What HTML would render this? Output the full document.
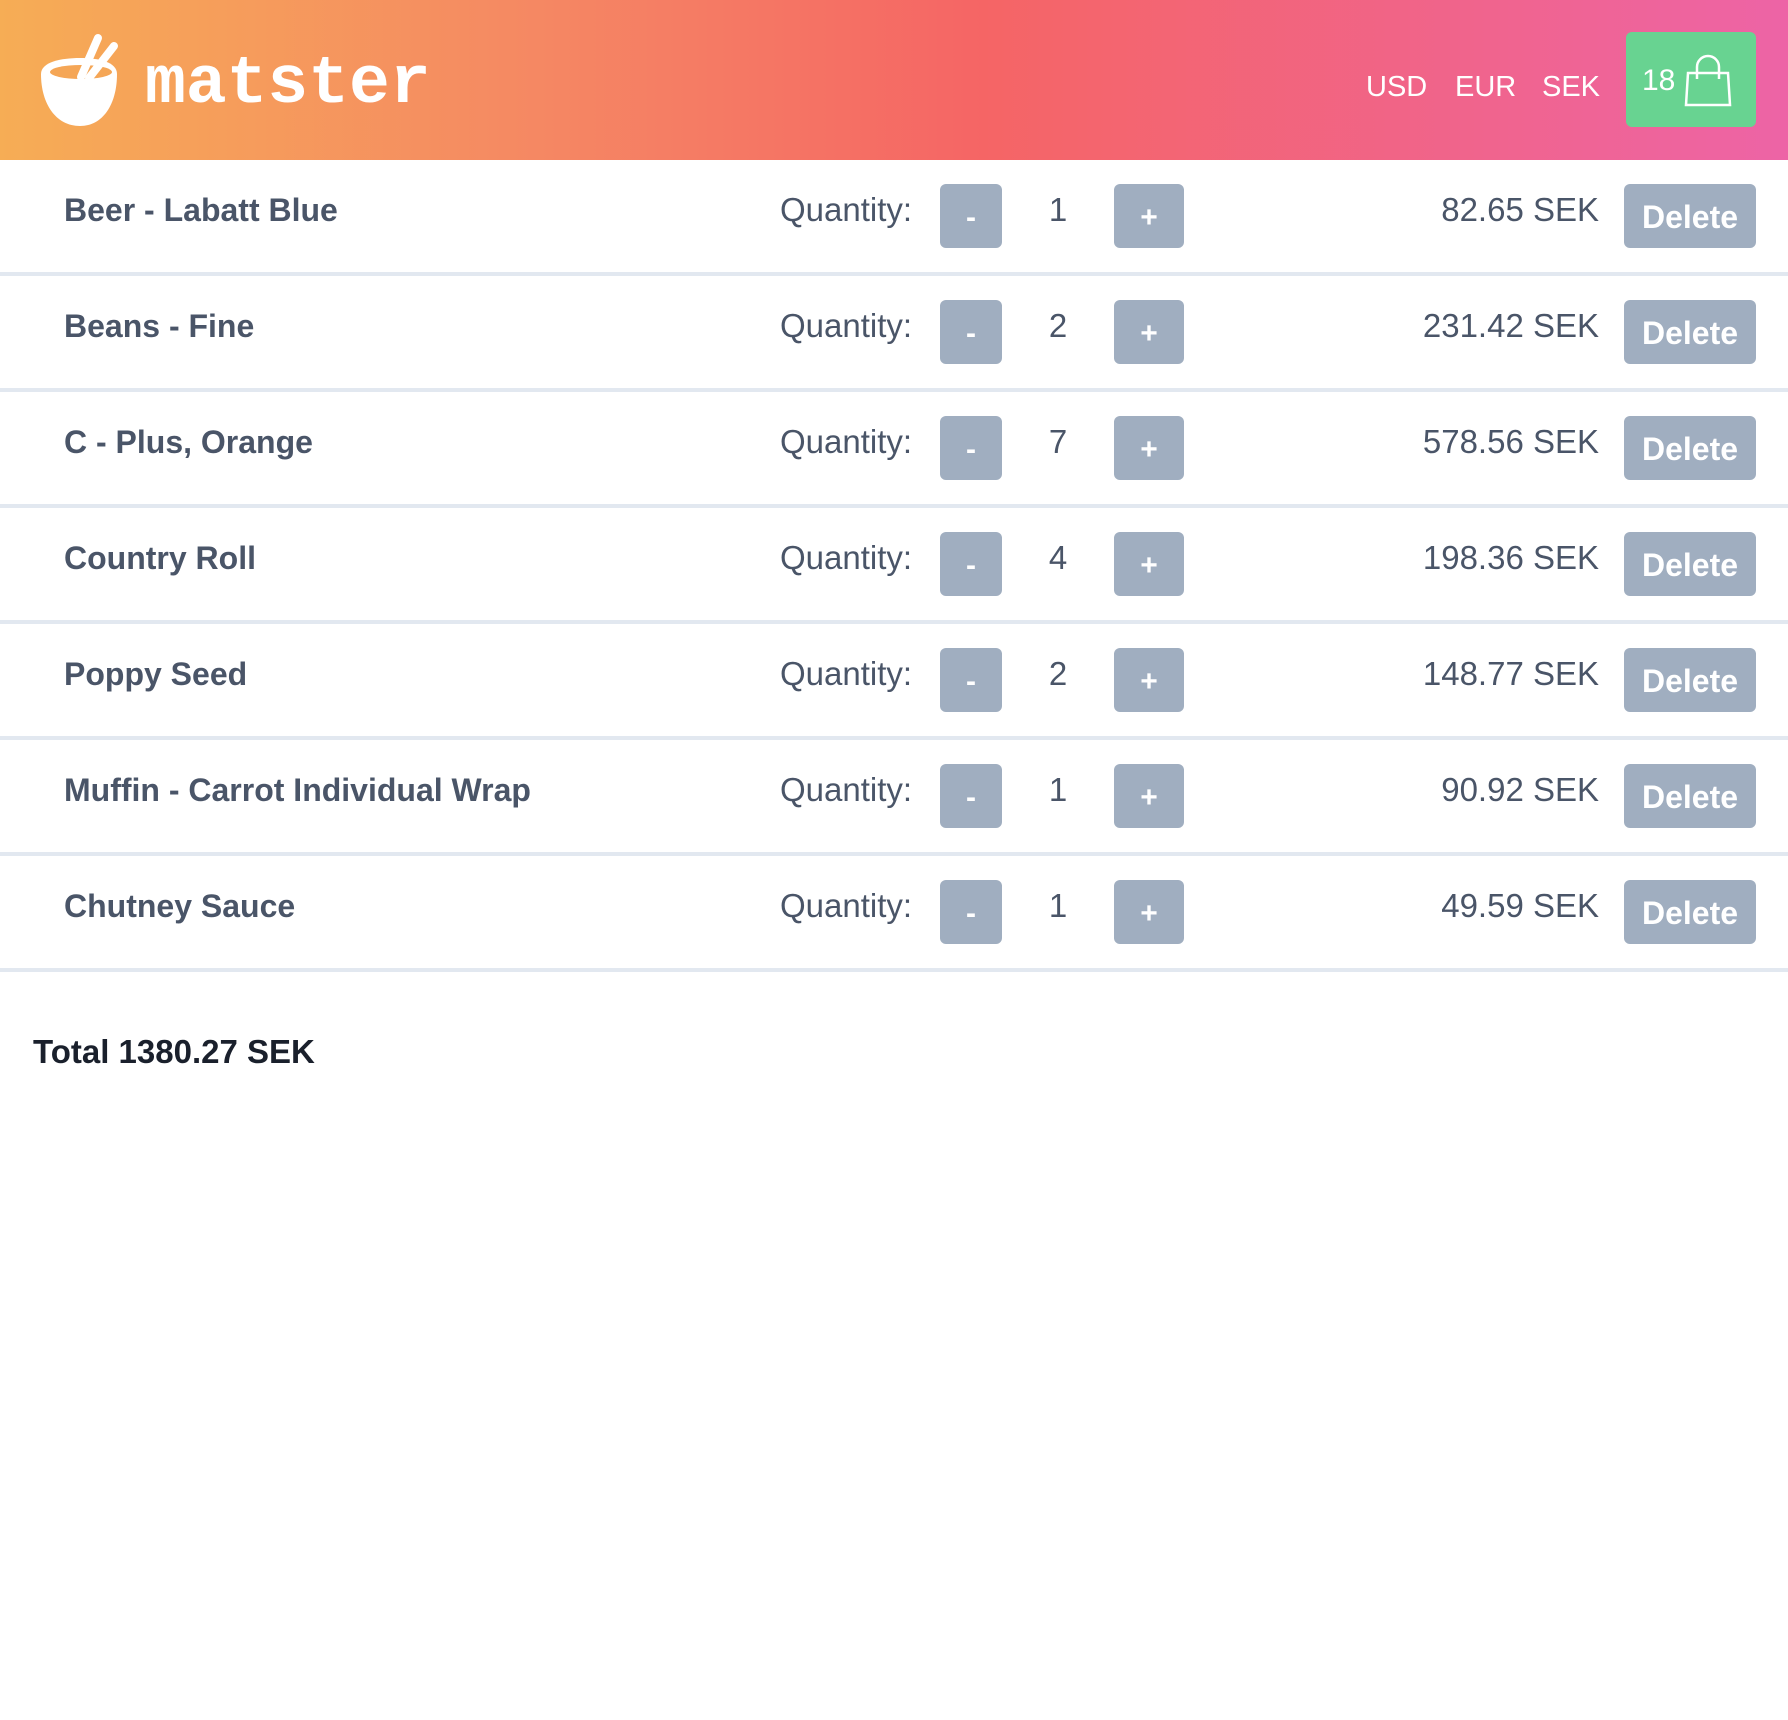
<!DOCTYPE html>
<html><head><meta charset="utf-8"><style>
*{margin:0;padding:0;box-sizing:border-box}
body{width:1788px;height:1720px;background:#fff;font-family:"Liberation Sans",Arial,sans-serif;position:relative;overflow:hidden}
.hdr{position:absolute;left:0;top:0;width:1788px;height:160px;background:linear-gradient(90deg,#f6ad55 0%,#f58863 30%,#f56565 55%,#ed64a6 100%)}
.logo{position:absolute;left:145px;top:40px;font-family:"Liberation Mono",monospace;font-weight:bold;font-size:68px;color:#fff;letter-spacing:0px;line-height:90px}
.cur{position:absolute;top:69px;font-size:29px;color:#fff;line-height:36px}
.cart{position:absolute;left:1626px;top:32px;width:130px;height:95px;background:#68d391;border-radius:6px}
.cart span{position:absolute;left:16px;top:31px;color:#fff;font-size:30px;line-height:36px}
.row{position:absolute;left:0;width:1788px;height:116px;border-bottom:4px solid #e2e8f0}
.name{position:absolute;left:64px;top:30px;font-size:32px;font-weight:bold;color:#4a5568;line-height:40px}
.ql{position:absolute;left:780px;top:30px;font-size:33px;color:#4a5568;line-height:40px}
.btn{position:absolute;top:24px;height:64px;background:#a0aec0;border-radius:6px;color:#fff;font-weight:bold;text-align:center}
.mi{left:940px;width:62px;font-size:30px;line-height:68px}
.pl{left:1114px;width:70px;font-size:30px;line-height:68px}
.qn{position:absolute;left:1030px;width:56px;text-align:center;top:30px;font-size:33px;color:#4a5568;line-height:40px}
.pr{position:absolute;right:189px;top:30px;font-size:33px;color:#4a5568;line-height:40px}
.del{left:1624px;width:132px;font-size:32px;line-height:66px}
.total{position:absolute;left:33px;top:1032px;font-size:33px;font-weight:bold;color:#1a202c;line-height:40px}
</style></head><body>
<div class="hdr">
<svg style="position:absolute;left:0;top:0" width="140" height="160" viewBox="0 0 140 160">
<path d="M41 74 C41 62 61 58 80 58 C99 58 117 62 117 74 C117 104 103 126 80 126 C56 126 41 104 41 74 Z" fill="#fff"/>
<ellipse cx="81" cy="72" rx="31" ry="7" fill="#f5a656"/>
<line x1="98" y1="38" x2="81" y2="77" stroke="#fff" stroke-width="8" stroke-linecap="round"/>
<line x1="114" y1="46" x2="89" y2="78" stroke="#fff" stroke-width="8" stroke-linecap="round"/>
</svg>
<div class="logo">matster</div>
<div class="cur" style="left:1366px">USD</div>
<div class="cur" style="left:1455px">EUR</div>
<div class="cur" style="left:1542px">SEK</div>
<div class="cart"><span>18</span>
<svg style="position:absolute;left:57px;top:21px" width="50" height="56" viewBox="0 0 50 56">
<path d="M5 20 L45 20 L47 52 L3 52 Z" fill="none" stroke="#fff" stroke-width="2.5"/>
<path d="M14 26 V14 A11 11 0 0 1 36 14 V26" fill="none" stroke="#fff" stroke-width="2.5"/>
</svg></div>
</div>

<div class="row" style="top:160px"><div class="name">Beer - Labatt Blue</div><div class="ql">Quantity:</div><div class="btn mi">-</div><div class="qn">1</div><div class="btn pl">+</div><div class="pr">82.65 SEK</div><div class="btn del">Delete</div></div>
<div class="row" style="top:276px"><div class="name">Beans - Fine</div><div class="ql">Quantity:</div><div class="btn mi">-</div><div class="qn">2</div><div class="btn pl">+</div><div class="pr">231.42 SEK</div><div class="btn del">Delete</div></div>
<div class="row" style="top:392px"><div class="name">C - Plus, Orange</div><div class="ql">Quantity:</div><div class="btn mi">-</div><div class="qn">7</div><div class="btn pl">+</div><div class="pr">578.56 SEK</div><div class="btn del">Delete</div></div>
<div class="row" style="top:508px"><div class="name">Country Roll</div><div class="ql">Quantity:</div><div class="btn mi">-</div><div class="qn">4</div><div class="btn pl">+</div><div class="pr">198.36 SEK</div><div class="btn del">Delete</div></div>
<div class="row" style="top:624px"><div class="name">Poppy Seed</div><div class="ql">Quantity:</div><div class="btn mi">-</div><div class="qn">2</div><div class="btn pl">+</div><div class="pr">148.77 SEK</div><div class="btn del">Delete</div></div>
<div class="row" style="top:740px"><div class="name">Muffin - Carrot Individual Wrap</div><div class="ql">Quantity:</div><div class="btn mi">-</div><div class="qn">1</div><div class="btn pl">+</div><div class="pr">90.92 SEK</div><div class="btn del">Delete</div></div>
<div class="row" style="top:856px"><div class="name">Chutney Sauce</div><div class="ql">Quantity:</div><div class="btn mi">-</div><div class="qn">1</div><div class="btn pl">+</div><div class="pr">49.59 SEK</div><div class="btn del">Delete</div></div>

<div class="total">Total 1380.27 SEK</div>
</body></html>
